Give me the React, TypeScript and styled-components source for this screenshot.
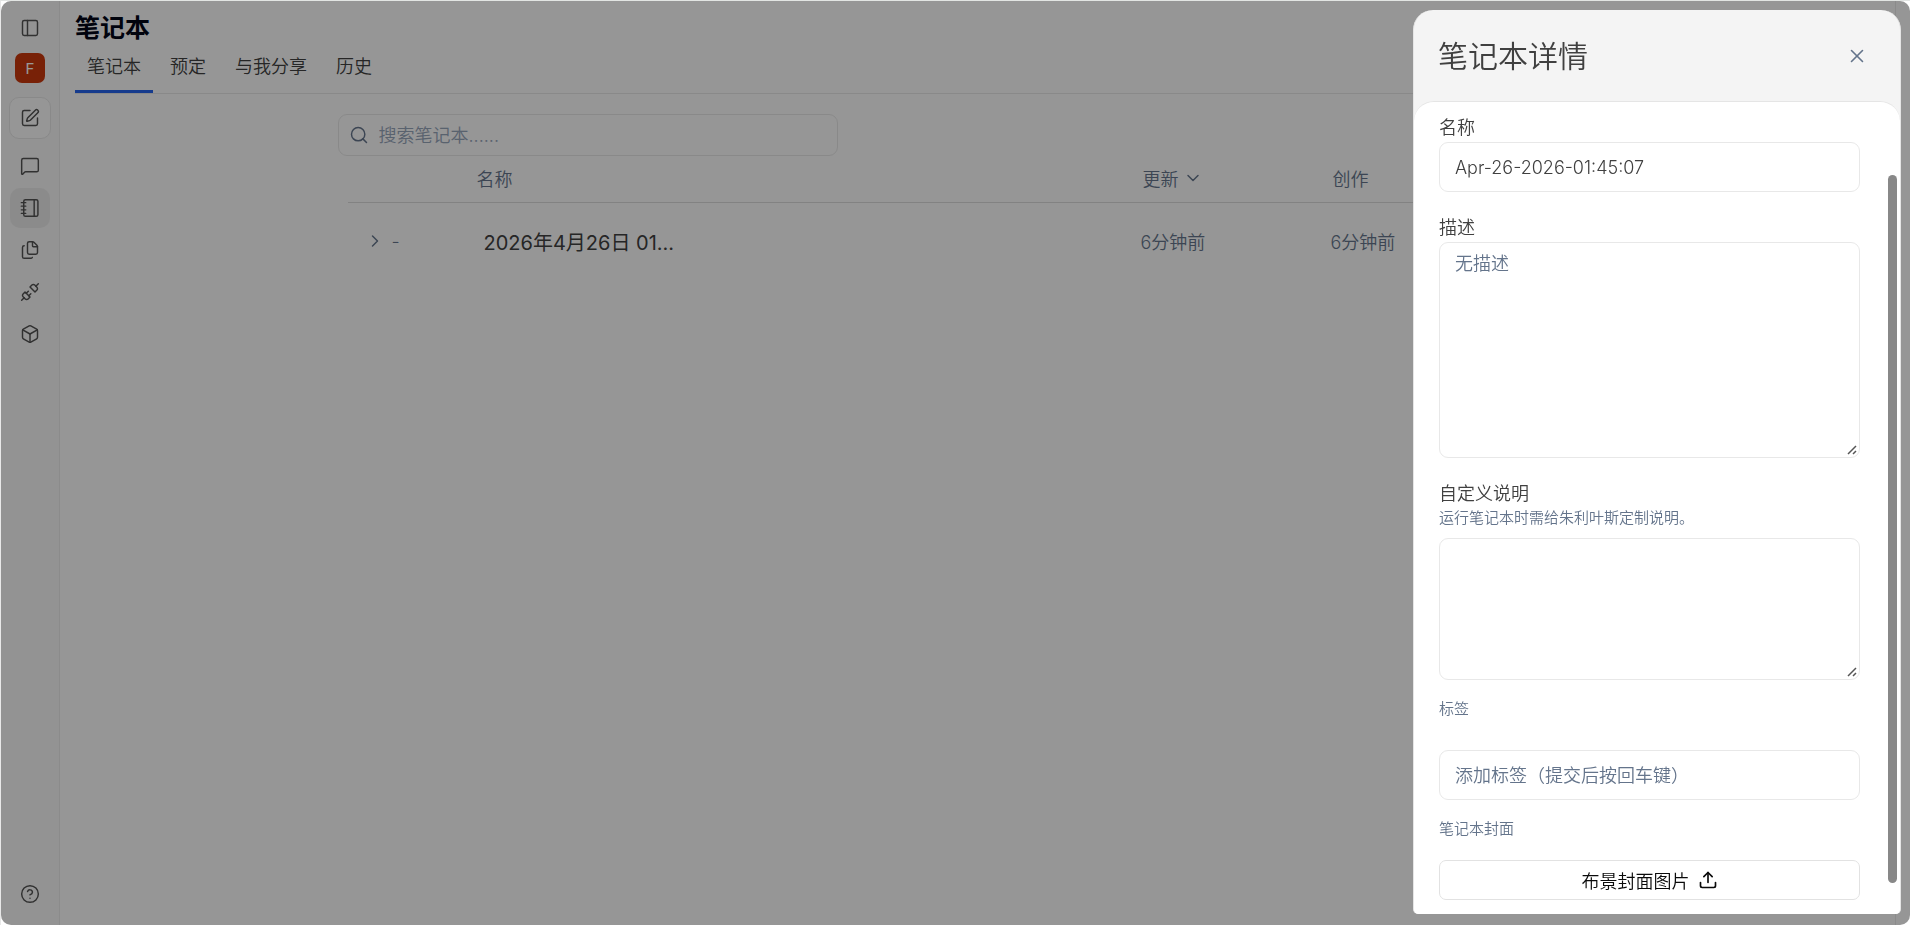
import React from "react";
import styled, { createGlobalStyle, css } from "styled-components";
import {
  Box,
  ChevronDown,
  ChevronRight,
  CircleQuestionMark,
  Files,
  MessageSquare,
  PanelLeft,
  Search,
  SquarePen,
  Unplug,
  Upload,
  X,
} from "lucide-react";

const GlobalStyle = createGlobalStyle`
  *, *::before, *::after { box-sizing: border-box; }
  body {
    margin: 0;
    background: #ffffff;
    color: #404040;
    font-family: Inter, "Noto Sans CJK SC", sans-serif;
    font-size: 18px;
    font-weight: 350;
  }
  button, input, textarea { font: inherit; color: inherit; }
  button { cursor: pointer; }
`;

const Frame = styled.div`
  display: flex;
  min-height: 100vh;
  border-top: 1px solid #e2e5e3;
  border-left: 1px solid #e8e8e8;
`;

const AppShell = styled.div`
  position: relative;
  display: flex;
  flex: 1;
  overflow: hidden;
  border-radius: 10px;
  background: #fafafa;
`;

const Sidebar = styled.nav`
  display: flex;
  flex-direction: column;
  align-items: center;
  width: 59px;
  padding: 7px 0 11px;
  border-right: 1px solid #e8e8e8;
  background: #f5f5f5;
`;

const SideButton = styled.button<{ $active?: boolean }>`
  display: grid;
  place-items: center;
  width: 40px;
  height: 40px;
  padding: 0;
  border: 0;
  border-radius: 10px;
  color: #525252;
  background: ${(p) => (p.$active ? "#e8e8e8" : "transparent")};
`;

const ComposeButton = styled(SideButton)`
  width: 42px;
  height: 42px;
  margin: 14px 0 7px;
  border: 1px solid #e5e5e5;
  background: #fafafa;
`;

const Avatar = styled.button`
  width: 30px;
  height: 30px;
  margin-top: 5px;
  padding: 0;
  border: 0;
  border-radius: 7px;
  background: #c8370c;
  color: #ffffff;
  font-size: 15px;
  font-weight: 400;
`;

const SideLinks = styled.div`
  display: flex;
  flex: 1;
  flex-direction: column;
  gap: 2px;
`;

const Main = styled.main`
  flex: 1;
  min-width: 0;
  margin-right: 14px;
  border-right: 1px solid #e8e8e8;
`;

const PageHeader = styled.header`
  padding: 9px 0 0 15px;
`;

const PageTitle = styled.h1`
  margin: 0;
  color: #020617;
  font-size: 25px;
  font-weight: 700;
  line-height: 36px;
`;

const Tabs = styled.div`
  display: flex;
  gap: 5px;
  border-bottom: 1px solid #e5e5e5;
`;

const Tab = styled.button<{ $active?: boolean }>`
  height: 47px;
  padding: 0 12px 3px;
  border: 0;
  border-bottom: 3px solid ${(p) => (p.$active ? "#2563eb" : "transparent")};
  background: none;
  line-height: 24px;
`;

const Content = styled.section`
  max-width: 1280px;
  margin: 0 auto;
  padding-top: 20px;
`;

const SearchBox = styled.label`
  display: flex;
  align-items: center;
  gap: 10px;
  width: 500px;
  height: 42px;
  padding: 0 10px;
  border: 1px solid #e5e5e5;
  border-radius: 9px;
  color: #64748b;
`;

const SearchInput = styled.input`
  flex: 1;
  min-width: 0;
  padding: 0;
  border: 0;
  outline: 0;
  background: none;
  &::placeholder { color: #94a3b8; opacity: 1; }
`;

const Table = styled.table`
  width: calc(100% - 20px);
  margin: 0 10px;
  border-collapse: collapse;
  table-layout: fixed;
  color: #64748b;
  text-align: left;
`;

const HeadCell = styled.th<{ $width?: number }>`
  width: ${(p) => (p.$width ? `${p.$width}px` : "auto")};
  height: 46px;
  padding: 0 0 2px 2px;
  border-bottom: 1px solid #d9d9d9;
  font-weight: 350;
`;

const SortButton = styled.button`
  display: flex;
  align-items: center;
  gap: 4px;
  padding: 0;
  border: 0;
  background: none;
`;

const Cell = styled.td`
  height: 80px;
  padding: 0 0 2px;
`;

const NameCell = styled(Cell)`
  padding-left: 9px;
  color: #404040;
  font-size: 20px;
  font-weight: 400;
`;

const ExpandButton = styled.button`
  display: flex;
  align-items: center;
  gap: 7px;
  padding: 0 0 0 17px;
  border: 0;
  background: none;
`;

const Overlay = styled.div`
  position: absolute;
  inset: 0;
  background: rgba(0, 0, 0, 0.4);
`;

const Drawer = styled.aside`
  position: fixed;
  top: 10px;
  right: 9px;
  bottom: 11px;
  display: flex;
  flex-direction: column;
  width: 488px;
  overflow: hidden;
  border: solid #e5e5e5;
  border-width: 0 1px;
  border-radius: 20px 20px 5px 5px;
  background: #f4f4f4;
`;

const DrawerHeader = styled.header`
  display: flex;
  flex: none;
  align-items: center;
  justify-content: space-between;
  height: 91px;
  padding: 0 30px 0 24px;
`;

const DrawerTitle = styled.h2`
  margin: 0;
  font-size: 30px;
  font-weight: 350;
  line-height: 40px;
`;

const CloseButton = styled.button`
  display: grid;
  place-items: center;
  padding: 2px;
  border: 0;
  background: none;
  color: #64748b;
`;

const DrawerBody = styled.form`
  display: flex;
  flex: 1;
  flex-direction: column;
  min-height: 0;
  overflow-y: auto;
  scrollbar-width: none;
  padding: 12px 40px 13px 25px;
  border-top: 1px solid #e5e5e5;
  border-radius: 20px 20px 0 0;
  background: #ffffff;
`;

const Field = styled.div<{ $gap: number }>`
  display: flex;
  flex: none;
  flex-direction: column;
  margin-bottom: ${(p) => p.$gap}px;
`;

const Label = styled.label`
  line-height: 28px;
`;

const smallText = css`
  margin: 0;
  color: #64748b;
  font-size: 15px;
  line-height: 20px;
`;

const Hint = styled.p`
  ${smallText}
  margin-bottom: 10px;
`;

const SmallLabel = styled.label<{ $gap: number }>`
  ${smallText}
  margin-bottom: ${(p) => p.$gap}px;
`;

const control = css`
  width: 100%;
  border: 1px solid #e8e8e8;
  border-radius: 9px;
  outline: 0;
  background: #ffffff;
  &::placeholder { color: #64748b; opacity: 1; }
`;

const TextInput = styled.input`
  ${control}
  height: 50px;
  padding: 0 15px;
`;

const resizeGrip =
  "data:image/svg+xml,%3Csvg xmlns='http://www.w3.org/2000/svg' width='15' height='15' fill='none' stroke='%23555' stroke-width='1.5'%3E%3Cpath d='M4 12l8-8M9 12l3-3'/%3E%3C/svg%3E";

const TextArea = styled.textarea<{ $height: number }>`
  ${control}
  display: block;
  height: ${(p) => p.$height}px;
  padding: 7px 15px;
  line-height: 28px;
  resize: vertical;
  &::-webkit-resizer { background: url("${resizeGrip}") no-repeat right bottom; }
`;

const UploadButton = styled.button`
  display: flex;
  align-items: center;
  justify-content: center;
  gap: 8px;
  height: 40px;
  border: 1px solid #e2e2e2;
  border-radius: 7px;
  background: #ffffff;
  color: #0a0a0a;
`;

const ScrollThumb = styled.div`
  position: absolute;
  top: 165px;
  right: 3px;
  bottom: 31px;
  width: 9px;
  border-radius: 5px;
  background: #888888;
`;

const icon = { size: 20, strokeWidth: 1.75 };

function NotebookIcon() {
  return (
    <svg width="20" height="20" viewBox="0 0 24 24" fill="none" stroke="currentColor" strokeWidth="1.75" strokeLinecap="round">
      <rect x="4.5" y="2" width="17" height="20" rx="2" />
      <path d="M17 2v20" />
      <path d="M1.5 5.6h5.5M1.5 9.8h5.5M1.5 14.2h5.5M1.5 18.4h5.5" strokeWidth="1.5" />
    </svg>
  );
}

export default function App() {
  return (
    <Frame>
      <GlobalStyle />
      <AppShell>
        <Sidebar>
          <SideButton aria-label="切换侧栏"><PanelLeft {...icon} /></SideButton>
          <Avatar>F</Avatar>
          <ComposeButton aria-label="新建"><SquarePen {...icon} /></ComposeButton>
          <SideLinks>
            <SideButton aria-label="聊天"><MessageSquare {...icon} /></SideButton>
            <SideButton aria-label="笔记本" $active><NotebookIcon /></SideButton>
            <SideButton aria-label="文件"><Files {...icon} /></SideButton>
            <SideButton aria-label="连接"><Unplug {...icon} /></SideButton>
            <SideButton aria-label="模型"><Box {...icon} /></SideButton>
          </SideLinks>
          <SideButton aria-label="帮助"><CircleQuestionMark {...icon} /></SideButton>
        </Sidebar>
        <Main>
          <PageHeader>
            <PageTitle>笔记本</PageTitle>
            <Tabs role="tablist">
              <Tab role="tab" aria-selected $active>笔记本</Tab>
              <Tab role="tab">预定</Tab>
              <Tab role="tab">与我分享</Tab>
              <Tab role="tab">历史</Tab>
            </Tabs>
          </PageHeader>
          <Content>
            <SearchBox>
              <Search size={20} strokeWidth={1.75} />
              <SearchInput placeholder="搜索笔记本......" aria-label="搜索笔记本" />
            </SearchBox>
            <Table>
              <thead>
                <tr>
                  <HeadCell $width={127} />
                  <HeadCell>名称</HeadCell>
                  <HeadCell $width={190}>
                    <SortButton>更新<ChevronDown size={20} strokeWidth={1.75} /></SortButton>
                  </HeadCell>
                  <HeadCell $width={277}>创作</HeadCell>
                </tr>
              </thead>
              <tbody>
                <tr>
                  <Cell>
                    <ExpandButton aria-label="展开"><ChevronRight size={20} strokeWidth={1.75} />-</ExpandButton>
                  </Cell>
                  <NameCell>2026年4月26日 01...</NameCell>
                  <Cell>6分钟前</Cell>
                  <Cell>6分钟前</Cell>
                </tr>
              </tbody>
            </Table>
          </Content>
        </Main>
        <Overlay />
      </AppShell>
      <Drawer role="dialog" aria-labelledby="drawer-title">
        <DrawerHeader>
          <DrawerTitle id="drawer-title">笔记本详情</DrawerTitle>
          <CloseButton aria-label="关闭"><X size={22} strokeWidth={1.75} /></CloseButton>
        </DrawerHeader>
        <DrawerBody>
          <Field $gap={22}>
            <Label htmlFor="name">名称</Label>
            <TextInput id="name" defaultValue="Apr-26-2026-01:45:07" />
          </Field>
          <Field $gap={22}>
            <Label htmlFor="description">描述</Label>
            <TextArea id="description" $height={216} placeholder="无描述" />
          </Field>
          <Field $gap={19}>
            <Label htmlFor="instructions">自定义说明</Label>
            <Hint>运行笔记本时需给朱利叶斯定制说明。</Hint>
            <TextArea id="instructions" $height={142} />
          </Field>
          <Field $gap={19}>
            <SmallLabel htmlFor="tags" $gap={31}>标签</SmallLabel>
            <TextInput id="tags" placeholder="添加标签（提交后按回车键）" />
          </Field>
          <Field $gap={0}>
            <SmallLabel htmlFor="cover" $gap={21}>笔记本封面</SmallLabel>
            <UploadButton id="cover" type="button">布景封面图片<Upload size={20} strokeWidth={2} /></UploadButton>
          </Field>
        </DrawerBody>
        <ScrollThumb />
      </Drawer>
    </Frame>
  );
}
